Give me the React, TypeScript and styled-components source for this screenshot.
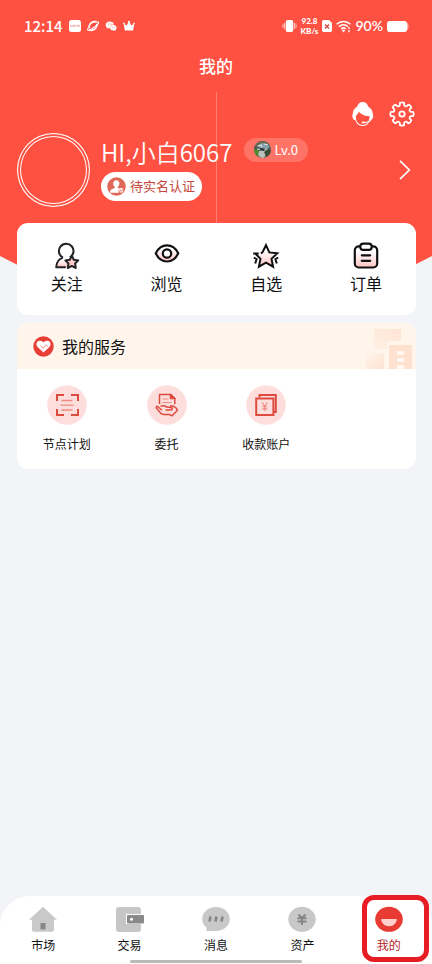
import React from "react";
import styled, { createGlobalStyle } from "styled-components";

const GlobalStyle = createGlobalStyle`
  * { box-sizing: border-box; }
  body {
    margin: 0;
    background: #f2f4f7;
    color: #111;
    font-family: "Noto Sans CJK SC", "Noto Sans", sans-serif;
  }
  button {
    border: 0;
    padding: 0;
    margin: 0;
    background: none;
    color: inherit;
    font: inherit;
    cursor: pointer;
  }
  a { color: inherit; text-decoration: none; }
  svg { display: block; flex: none; }
`;

const Page = styled.div`
  min-height: 100vh;
  display: flex;
  flex-direction: column;
`;

const Hero = styled.header`
  color: #fff;
  padding-bottom: 93px;
  background: linear-gradient(#ff7d70, #ff7d70) 50% 92px / 1px 132px no-repeat, #fe5142;
  clip-path: polygon(0 0, 100% 0, 100% calc(100% - 44px), 80% 100%, 20% 100%, 0 calc(100% - 44px));
`;

const StatusBar = styled.div`
  height: 52px;
  padding: 0 23px 0 24px;
  display: flex;
  align-items: center;
  justify-content: space-between;
`;

const StatusGroup = styled.div<{ $gap: number }>`
  display: flex;
  align-items: center;
  gap: ${(p) => p.$gap}px;
`;

const Clock = styled.span`
  font-size: 15px;
  line-height: 20px;
  font-weight: 500;
`;

const Speed = styled.span`
  display: flex;
  flex-direction: column;
  align-items: center;
  font-family: Lato, sans-serif;
  font-size: 8px;
  line-height: 10px;
  font-weight: 900;
`;

const Percent = styled.span`
  font-family: Lato, sans-serif;
  font-size: 14px;
  line-height: 20px;
  font-weight: 600;
`;

const Title = styled.h1`
  margin: 0;
  height: 28px;
  line-height: 28px;
  font-size: 17px;
  font-weight: 500;
  text-align: center;
`;

const Tools = styled.div`
  display: flex;
  justify-content: flex-end;
  align-items: center;
  gap: 14px;
  height: 48px;
  padding: 20px 17px 0 0;
`;

const Profile = styled.section`
  display: flex;
  align-items: center;
  gap: 11px;
  margin-top: 5px;
  padding: 0 20px 0 17px;
`;

const Avatar = styled.div`
  flex: none;
  width: 73px;
  height: 74px;
  border: 1px solid #fff;
  border-radius: 50%;
  box-shadow: inset 0 0 0 2px #fe5142, inset 0 0 0 3px #fff;
`;

const Identity = styled.div`
  flex: 1;
  display: flex;
  flex-direction: column;
  align-items: flex-start;
  gap: 2px;
  padding-bottom: 6px;
`;

const NameRow = styled.div`
  display: flex;
  align-items: center;
  gap: 12px;
`;

const Name = styled.h2`
  margin: 0;
  font-size: 24px;
  line-height: 36px;
  font-weight: 350;
  white-space: nowrap;
`;

const Level = styled.span`
  display: flex;
  align-items: center;
  gap: 3px;
  height: 24px;
  margin-bottom: 4px;
  padding: 0 10px;
  border-radius: 12px;
  background: #ff7467;
  font-size: 13px;
  line-height: 24px;
`;

const Verify = styled.button`
  display: flex;
  align-items: center;
  gap: 4px;
  height: 29px;
  padding: 0 7px 0 6px;
  border-radius: 15px;
  background: #fff;
  color: #c4483b;
  font-size: 13px;
  line-height: 20px;
`;

const Main = styled.main`
  margin: -77px 16px 24px 17px;
  display: flex;
  flex-direction: column;
  gap: 8px;
  position: relative;
`;

const Card = styled.section`
  border-radius: 11px;
  background: #fff;
  overflow: hidden;
`;

const Grid = styled.div<{ $top: number; $bottom: number }>`
  display: grid;
  grid-template-columns: repeat(4, 1fr);
  padding: ${(p) => p.$top}px 0 ${(p) => p.$bottom}px;
`;

const Shortcut = styled.button`
  display: flex;
  flex-direction: column;
  align-items: center;
  gap: 1px;
  font-size: 16px;
  line-height: 24px;
`;

const Service = styled.button`
  display: flex;
  flex-direction: column;
  align-items: center;
  gap: 10px;
  font-size: 12px;
  line-height: 18px;
`;

const CardHead = styled.div`
  display: flex;
  align-items: center;
  gap: 8px;
  height: 46px;
  padding: 0 4px 0 16px;
  background: #fff5eb;
`;

const CardTitle = styled.h3`
  flex: 1;
  margin: 0;
  font-size: 16px;
  line-height: 24px;
  font-weight: 400;
`;

const TabBar = styled.nav`
  margin-top: auto;
  display: flex;
  flex-direction: column;
  align-items: center;
  border-radius: 30px 30px 0 0;
  background: #fff;
`;

const Tabs = styled.div`
  width: 100%;
  display: grid;
  grid-template-columns: repeat(5, 1fr);
`;

const Tab = styled.a<{ $active?: boolean }>`
  position: relative;
  display: flex;
  flex-direction: column;
  align-items: center;
  gap: 4px;
  height: 64px;
  padding-top: 10px;
  font-size: 12px;
  line-height: 18px;
  color: ${(p) => (p.$active ? "#b5231f" : "#111")};
`;

const Highlight = styled.span`
  position: absolute;
  inset: -1px 3px -2px 16px;
  border: 5px solid #e81c24;
  border-radius: 12px;
`;

const HomeIndicator = styled.div`
  width: 40%;
  height: 3px;
  margin-bottom: 1px;
  border-radius: 2px;
  background: #b8b8b8;
`;

const gearPath = (() => {
  const points: string[] = [];
  const teeth = 8;
  for (let i = 0; i < teeth; i++) {
    const mid = (i * 2 * Math.PI) / teeth - Math.PI / 2;
    const at = (r: number, a: number) =>
      `${(13 + r * Math.cos(mid + a)).toFixed(2)} ${(13 + r * Math.sin(mid + a)).toFixed(2)}`;
    points.push(`${i ? "L" : "M"}${at(9.2, -0.24)}`);
    points.push(`L${at(11.3, -0.19)} Q${at(12.3, 0)} ${at(11.3, 0.19)} L${at(9.2, 0.24)}`);
    points.push(`Q${at(7.6, 0.393)} ${at(9.2, 0.545)}`);
  }
  return points.join(" ") + "Z";
})();

const GearIcon = () => (
  <svg width="26" height="26" viewBox="0 0 26 26" fill="none" stroke="#fff" strokeWidth="1.8" strokeLinejoin="round">
    <path d={gearPath} />
    <circle cx="13" cy="13" r="2.7" />
  </svg>
);

const SupportIcon = () => (
  <svg width="24" height="26" viewBox="0 0 24 26">
    <path
      d="M6.300 5.600C6.700 2.800 8.800 1 11.700 1s5 1.800 5.400 4.600c3.200 1.800 4.600 4.500 4.600 7.200.9 2 .6 4.700-1.500 6.200H18.900L18.500 15.300C14 15.200 10 13.500 7.800 10.800 7.300 12.600 6 13.800 4.900 14.800L4.800 19H3.300C1.200 17.500.9 14.800 1.800 12.800c0-2.700 1.300-5.400 4.500-7.200z"
      fill="#fff"
    />
    <path d="M4.300 17c.4 4.800 3.700 7.500 7.300 7.500s6.900-2.700 7.400-7.500" fill="none" stroke="#fff" strokeWidth="1.100" />
    <path d="M19.900 18.500c-1.200 2.100-3.300 3-6.200 3" fill="none" stroke="#fff" strokeWidth="1.200" />
    <ellipse cx="12.300" cy="21.400" rx="1.800" ry=".9" fill="#fff" />
  </svg>
);

const StatusApps = () => (
  <>
    <svg width="12" height="12" viewBox="0 0 12 12">
      <rect width="12" height="12" rx="2.500" fill="#fff" />
      <path d="M1.500 5v1.500h1.500V5m1 2V5h1.500v1.500H4M6.500 5l.6 1.500L7.700 5m1 1.500h1.700V5H8.700z" fill="none" stroke="#e89a91" strokeWidth=".6" />
    </svg>
    <svg width="12" height="12" viewBox="0 0 13 12" fill="none" stroke="#fff">
      <path d="M2.500 8.500C1.500 5 4.500 1.300 8.500 1.300c1 0 1.800.2 2.300.6M10.700 3.500C11.500 7 8.500 10.700 4.800 10.700c-1 0-1.700-.2-2.300-.6" strokeWidth="1.800" />
      <path d="M10.800 1.900C13.500 1 13.200 3 10.500 5.200 7.500 7.700 4 10 2 10.700.2 11.300.2 9.500 1.600 8" strokeWidth="1.100" />
    </svg>
    <svg width="12" height="12" viewBox="0 0 13 12">
      <path d="M5.200 1C2.500 1 .7 2.700.7 4.800c0 1.200.6 2.200 1.500 2.900L1.800 9l1.600-.8c.6.200 1.200.3 1.800.3 0-2.700 1.900-4.200 4.500-4.200C9.300 2.300 7.500 1 5.200 1z" fill="#fff" />
      <path d="M9 5c-2.100 0-3.600 1.300-3.600 3S6.900 11 9 11c.4 0 .9-.1 1.300-.2l1.300.7-.3-1.200c.8-.6 1.300-1.400 1.300-2.300C12.600 6.300 11.100 5 9 5z" fill="#fff" />
      <g fill="#fe5142"><circle cx="3.700" cy="3.900" r=".6" /><circle cx="6.500" cy="3.900" r=".6" /><circle cx="7.900" cy="7.300" r=".5" /><circle cx="10.200" cy="7.300" r=".5" /></g>
    </svg>
    <svg width="12" height="12" viewBox="0 0 13 12" fill="#fff">
      <path d="M2 10.800.7 3.400l3.100 2L6.500.9l2.700 4.500 3.100-2-1.300 7.400z" />
      <circle cx="1" cy="3.200" r=".9" /><circle cx="12" cy="3.200" r=".9" /><circle cx="6.500" cy="1.400" r="1.100" />
    </svg>
  </>
);

const VibrateIcon = () => (
  <svg width="15" height="14" viewBox="0 0 15 14">
    <rect x="3.800" y="1" width="7.400" height="12" rx="1.800" fill="#fff" />
    <path d="M2.500 4v6M12.500 4v6" stroke="#ffc0b9" strokeWidth="1.500" />
    <path d="M.8 5.500v3M14.200 5.500v3" stroke="#ffa99f" strokeWidth="1.300" />
  </svg>
);

const SimIcon = () => (
  <svg width="10" height="12" viewBox="0 0 10 12">
    <path d="M2 0h5l3 3v7.200c0 1-.8 1.800-1.800 1.800H1.800C.8 12 0 11.200 0 10.200V2C0 .9.900 0 2 0z" fill="#fff" />
    <path d="m3 4.500 4 4m0-4-4 4" stroke="#d44a3f" strokeWidth="1.400" />
  </svg>
);

const WifiIcon = () => (
  <svg width="15" height="13" viewBox="0 0 15 13" fill="none" stroke="#fff" strokeWidth="1.500">
    <path d="M.6 4.300c3.900-3.700 9.900-3.700 13.800 0M2.900 6.700c2.600-2.500 6.600-2.500 9.200 0M5.100 9c1.400-1.300 3.400-1.300 4.800 0" />
    <path d="m5.800 10.200 1.700 2.300 1.700-2.300c-.9-.8-2.500-.8-3.400 0z" fill="#fff" stroke="none" />
    <path d="M13 7.300v2m0 1v2" strokeWidth="1.400" />
  </svg>
);

const BatteryIcon = () => (
  <svg width="22" height="11" viewBox="0 0 22 11">
    <rect width="20" height="11" rx="2.800" fill="#fff" />
    <path d="M20 1.500c1.200.8 1.500 2.200 1.500 4S21.200 8.700 20 9.500z" fill="#ffb3ab" />
  </svg>
);

const LevelIcon = () => (
  <svg width="17" height="17" viewBox="0 0 17 17">
    <defs><clipPath id="levelClip"><circle cx="8.500" cy="8.500" r="8.500" /></clipPath></defs>
    <g clipPath="url(#levelClip)">
      <rect width="17" height="17" fill="#4d5c52" />
      <path d="M0 0h17v4L10 3 5 6 0 5z" fill="#6c6a4e" />
      <path d="m3 5 5-3 5 1 3 3-4 2-6-1z" fill="#84a0ab" />
      <path d="m4 5 3-1 1 2m2-3 4 1M3 8l5 1 6-1" stroke="#d7e2e2" strokeWidth="1.200" fill="none" />
      <path d="m0 8 5 2-2 4 3 3H0z" fill="#4d9228" />
      <path d="m5 10 9-1-4 8H7l-3-3z" fill="#b9c2b9" />
      <path d="m10 11 4-3 3 2v5l-4 2z" fill="#394c36" />
      <path d="m6 7 5 1-1 2-4-1z" fill="#263238" />
    </g>
  </svg>
);

const VerifyIcon = () => (
  <svg width="19" height="19" viewBox="0 0 19 19">
    <circle cx="9.500" cy="9.500" r="9.300" fill="#df6858" />
    <path d="M9.300 3.200c2 0 3.100 1.500 3.100 3.300 0 1.500-.7 2.700-1.500 3.300v1.300l2 .7c-1.500 1-1.700 2.500-.8 3.900H3.200c0-2.300.4-3 1.600-3.500l2.900-1.100V9.800c-.8-.6-1.500-1.800-1.500-3.300 0-1.800 1.100-3.300 3.100-3.300z" fill="#fff" />
    <path d="m14.200 10.800 2.100.8v1.500c0 1.500-.8 2.300-2.100 2.900-1.300-.6-2.100-1.400-2.100-2.900v-1.500z" fill="#ffe5e0" />
    <path d="m13 13.200 1 1 1.500-1.800" fill="none" stroke="#df6858" strokeWidth=".8" />
  </svg>
);

const ChevronIcon = () => (
  <svg width="14" height="22" viewBox="0 0 14 22" fill="none" stroke="#fff" strokeWidth="1.700">
    <path d="m2 1.800 9.300 9.200L2 20.200" />
  </svg>
);

const PinkFill = () => (
  <defs>
    <linearGradient id="pink" x1="0" y1="0" x2="0" y2="1">
      <stop offset=".25" stopColor="#fff" /><stop offset="1" stopColor="#ffc2c2" />
    </linearGradient>
  </defs>
);

const FollowIcon = () => (
  <svg width="28" height="28" viewBox="0 0 28 28" fill="none" stroke="#222326" strokeWidth="2" strokeLinejoin="round">
    <PinkFill />
    <path d="M10 15.600C5.500 17 3.400 20.300 3.200 25.200H16l4-6-3-3.500z" fill="url(#pink)" stroke="none" />
    <path d="M10 15.600a7.300 7.300 0 1 1 6.800-.2M10 15.600C5.500 17 3.400 20.300 3.200 25.200h9.600" />
    <path d="m18.800 13.600 2 4.100 4.500.7-3.200 3.100.7 4.500-4-2.100-4 2.100.7-4.500-3.200-3.100 4.500-.7z" fill="#ffc9cb" />
  </svg>
);

const EyeIcon = () => (
  <svg width="28" height="28" viewBox="0 0 28 28" fill="none" stroke="#111" strokeWidth="2.200">
    <path d="M2.800 11.300c2.400-5.200 6.300-8 11.200-8s8.800 2.800 11.200 8c-2.400 5.400-6.300 8.200-11.200 8.200s-8.800-2.800-11.200-8.200z" fill="url(#pink)" />
    <circle cx="14" cy="11.500" r="4.200" fill="#fff" />
  </svg>
);

const StarIcon = () => (
  <svg width="28" height="28" viewBox="0 0 28 28" fill="none" stroke="#111" strokeWidth="2">
    <path d="m14 3 3.300 7.400 8 .9-5.800 5.500 1.600 7.900-7.100-4-7.100 4 1.600-7.900-5.800-5.500 8-.9z" fill="url(#pink)" stroke="none" />
    <path d="M9 11.500 10.700 10 14 3.200l3.300 7.200 8 .9-5.800 5.500 1.600 7.900-7.100-4-7.100 4 1.600-7.900-5-5" />
    <path d="M1.200 11.400h5.500M1.800 15.500l2.800 1.700-1.400 4.300M26.200 15.500l-2.800 1.700 1.400 4.300" />
  </svg>
);

const OrderIcon = () => (
  <svg width="28" height="28" viewBox="0 0 28 28" fill="none" stroke="#111" strokeWidth="2.200" strokeLinecap="round">
    <rect x="2.800" y="4.300" width="22.400" height="21.200" rx="4" fill="url(#pink)" />
    <rect x="8.300" y="1.600" width="11.400" height="6.300" rx="3" fill="#fff" />
    <path d="M9.800 13.300h8.400M9.800 18.800h8.400" />
  </svg>
);

const HeartIcon = () => (
  <svg width="21" height="21" viewBox="0 0 21 21">
    <circle cx="10.500" cy="10.500" r="10.200" fill="#e73e36" />
    <path d="M10.500 16.600 4.600 11C2.500 8.800 3.400 5.300 6.400 4.800c1.700-.3 3.200.5 4.100 1.800.9-1.300 2.400-2.100 4.100-1.800 3 .5 3.900 4 1.800 6.200z" fill="#fff" />
    <path d="m7.500 9.800 2.300 2c.8.600 1.500-.2 1.400-1l2-1.700 1.600 1.300" fill="none" stroke="#e9564f" strokeWidth=".7" />
  </svg>
);

const HeadDecoration = () => (
  <svg width="52" height="46" viewBox="0 0 52 46">
    <defs>
      <linearGradient id="decoA" x1="1" y1="0" x2="0" y2="1"><stop stopColor="#fee4d3" /><stop offset="1" stopColor="#fff1e5" /></linearGradient>
      <linearGradient id="decoB" x1="0" y1="0" x2="1" y2="1"><stop stopColor="#fff5eb" /><stop offset="1" stopColor="#fee1cf" /></linearGradient>
    </defs>
    <path d="M14 6h27v12H27v8H14z" fill="url(#decoA)" />
    <path d="M6 30h18v16H6z" fill="url(#decoB)" />
    <path d="M29 22h23v24H29z" fill="#fee1cf" />
    <path d="M37 28h7v4h-7zm0 7h7v4h-7zm0 7h7v4h-7z" fill="#fff7ef" />
  </svg>
);

const PlanIcon = () => (
  <svg width="40" height="40" viewBox="0 0 40 40" fill="none">
    <circle cx="20" cy="20" r="19.800" fill="#fddedd" />
    <path d="M10 16v-6h7M24 10h7v6M31 24v6h-7M17 30h-7v-6" stroke="#dc4b3e" strokeWidth="2" />
    <path d="M14.500 15.500h11M14.500 25h11M13.500 20.200h13" stroke="#ee8a80" strokeWidth="1.300" />
  </svg>
);

const EntrustIcon = () => (
  <svg width="40" height="40" viewBox="0 0 40 40" fill="none" stroke="#dc4b3e" strokeWidth="1.500" strokeLinejoin="round">
    <circle cx="20" cy="20" r="19.800" fill="#fddedd" stroke="none" />
    <path d="M12.500 19V9.500h11.300l4 4v5.800" />
    <path d="M23.500 9.500v4h4.300z" fill="#dc4b3e" />
    <path d="M15.500 14h6M15.500 17.500h9" stroke="#ee8a80" strokeWidth="1.200" />
    <path d="M18.500 25h5.200c2.300-.1 2.100-2.400 0-2.600l-4-.3c-1.700-1.300-4.500-1.500-6.200-.8M15 25.300l-4-3.500c-1.200-1-2.400.2-1.500 1.500l4.300 4.900c1 1 2 1.300 3.400 1.300h5.200l2.600 1.300 5.500-5.500c-1-2.400-2.700-3.600-5-4.200l-2.500-.2" />
  </svg>
);

const AccountIcon = () => (
  <svg width="40" height="40" viewBox="0 0 40 40" fill="none" stroke="#dc4b3e">
    <circle cx="20" cy="20" r="19.800" fill="#fddedd" stroke="none" />
    <path d="M13.500 12.500V10h16.300v17H28" strokeWidth="2" />
    <rect x="10.200" y="13.500" width="17.200" height="16.500" strokeWidth="2" />
    <path d="m16.300 17.500 2.500 4 2.500-4M18.800 21.500v4.500M16.300 21.800h5M16.300 23.900h5" stroke="#ee8a80" strokeWidth="1.100" />
  </svg>
);

const HouseIcon = () => (
  <svg width="28" height="26" viewBox="0 0 28 26">
    <path d="M14 .8 28 13.800h-3v10c0 1.200-.8 2-2 2H5c-1.200 0-2-.8-2-2v-10H0z" fill="#c9c9c9" />
    <path d="M11.500 17h5v6.500h-5z" fill="#878787" />
  </svg>
);

const WalletIcon = () => (
  <svg width="30" height="26" viewBox="0 0 30 26">
    <rect x="1" y="1" width="25" height="25" rx="3" fill="#c7c6c7" />
    <path d="M30 8H11v10h19" fill="#fff" />
    <rect x="12" y="9" width="17" height="8.500" rx="1" fill="#8a8a8a" />
    <circle cx="16.500" cy="13.200" r="1.500" fill="#fff" />
  </svg>
);

const MessageIcon = () => (
  <svg width="28" height="26" viewBox="0 0 28 26">
    <path d="M14 1c7.700 0 13.800 5.200 13.800 12S21.700 25 14 25H4.500v-3.500C1.700 19.400.2 16.500.2 13 .2 6.200 6.300 1 14 1z" fill="#c8c8c8" />
    <path d="m8.500 10.500-1 5M14.500 10.500l-1 5M20.500 10.500l-1 5" stroke="#858585" strokeWidth="2.600" />
  </svg>
);

const AssetIcon = () => (
  <svg width="28" height="26" viewBox="0 0 28 26">
    <ellipse cx="14" cy="13.300" rx="13.700" ry="12.500" fill="#c8c8c8" />
    <path d="m10.500 8.500 3.500 3.500 3.500-3.500M9.500 12.300h9M9.500 15.600h9M14 12v7" fill="none" stroke="#858585" strokeWidth="2" />
  </svg>
);

const MineIcon = () => (
  <svg width="28" height="26" viewBox="0 0 28 26">
    <ellipse cx="14" cy="13.300" rx="13.800" ry="12.500" fill="#e73b33" />
    <path d="M6.200 13h15.600c0 4-3.300 7.200-7.800 7.200S6.200 17 6.200 13z" fill="#ffcfcc" />
  </svg>
);

const shortcuts = [
  { label: "关注", Icon: FollowIcon },
  { label: "浏览", Icon: EyeIcon },
  { label: "自选", Icon: StarIcon },
  { label: "订单", Icon: OrderIcon },
];

const services = [
  { label: "节点计划", Icon: PlanIcon },
  { label: "委托", Icon: EntrustIcon },
  { label: "收款账户", Icon: AccountIcon },
];

const tabs = [
  { label: "市场", Icon: HouseIcon },
  { label: "交易", Icon: WalletIcon },
  { label: "消息", Icon: MessageIcon },
  { label: "资产", Icon: AssetIcon },
  { label: "我的", Icon: MineIcon, active: true },
];

export default function App() {
  return (
    <Page>
      <GlobalStyle />
      <Hero>
        <StatusBar>
          <StatusGroup $gap={6}>
            <Clock>12:14</Clock>
            <StatusApps />
          </StatusGroup>
          <StatusGroup $gap={4}>
            <VibrateIcon />
            <Speed><span>92.8</span><span>KB/s</span></Speed>
            <SimIcon />
            <WifiIcon />
            <Percent>90%</Percent>
            <BatteryIcon />
          </StatusGroup>
        </StatusBar>
        <Title>我的</Title>
        <Tools>
          <button aria-label="客服"><SupportIcon /></button>
          <button aria-label="设置"><GearIcon /></button>
        </Tools>
        <Profile>
          <Avatar />
          <Identity>
            <NameRow>
              <Name>HI,小白6067</Name>
              <Level><LevelIcon />Lv.0</Level>
            </NameRow>
            <Verify><VerifyIcon />待实名认证</Verify>
          </Identity>
          <button aria-label="个人资料"><ChevronIcon /></button>
        </Profile>
      </Hero>
      <Main>
        <Card>
          <Grid $top={19} $bottom={20}>
            {shortcuts.map(({ label, Icon }) => (
              <Shortcut key={label}><Icon />{label}</Shortcut>
            ))}
          </Grid>
        </Card>
        <Card>
          <CardHead>
            <HeartIcon />
            <CardTitle>我的服务</CardTitle>
            <HeadDecoration />
          </CardHead>
          <Grid $top={16} $bottom={16}>
            {services.map(({ label, Icon }) => (
              <Service key={label}><Icon />{label}</Service>
            ))}
          </Grid>
        </Card>
      </Main>
      <TabBar>
        <Tabs>
          {tabs.map(({ label, Icon, active }) => (
            <Tab key={label} href="#" $active={active} aria-current={active ? "page" : undefined}>
              <Icon />
              {label}
              {active && <Highlight />}
            </Tab>
          ))}
        </Tabs>
        <HomeIndicator />
      </TabBar>
    </Page>
  );
}
